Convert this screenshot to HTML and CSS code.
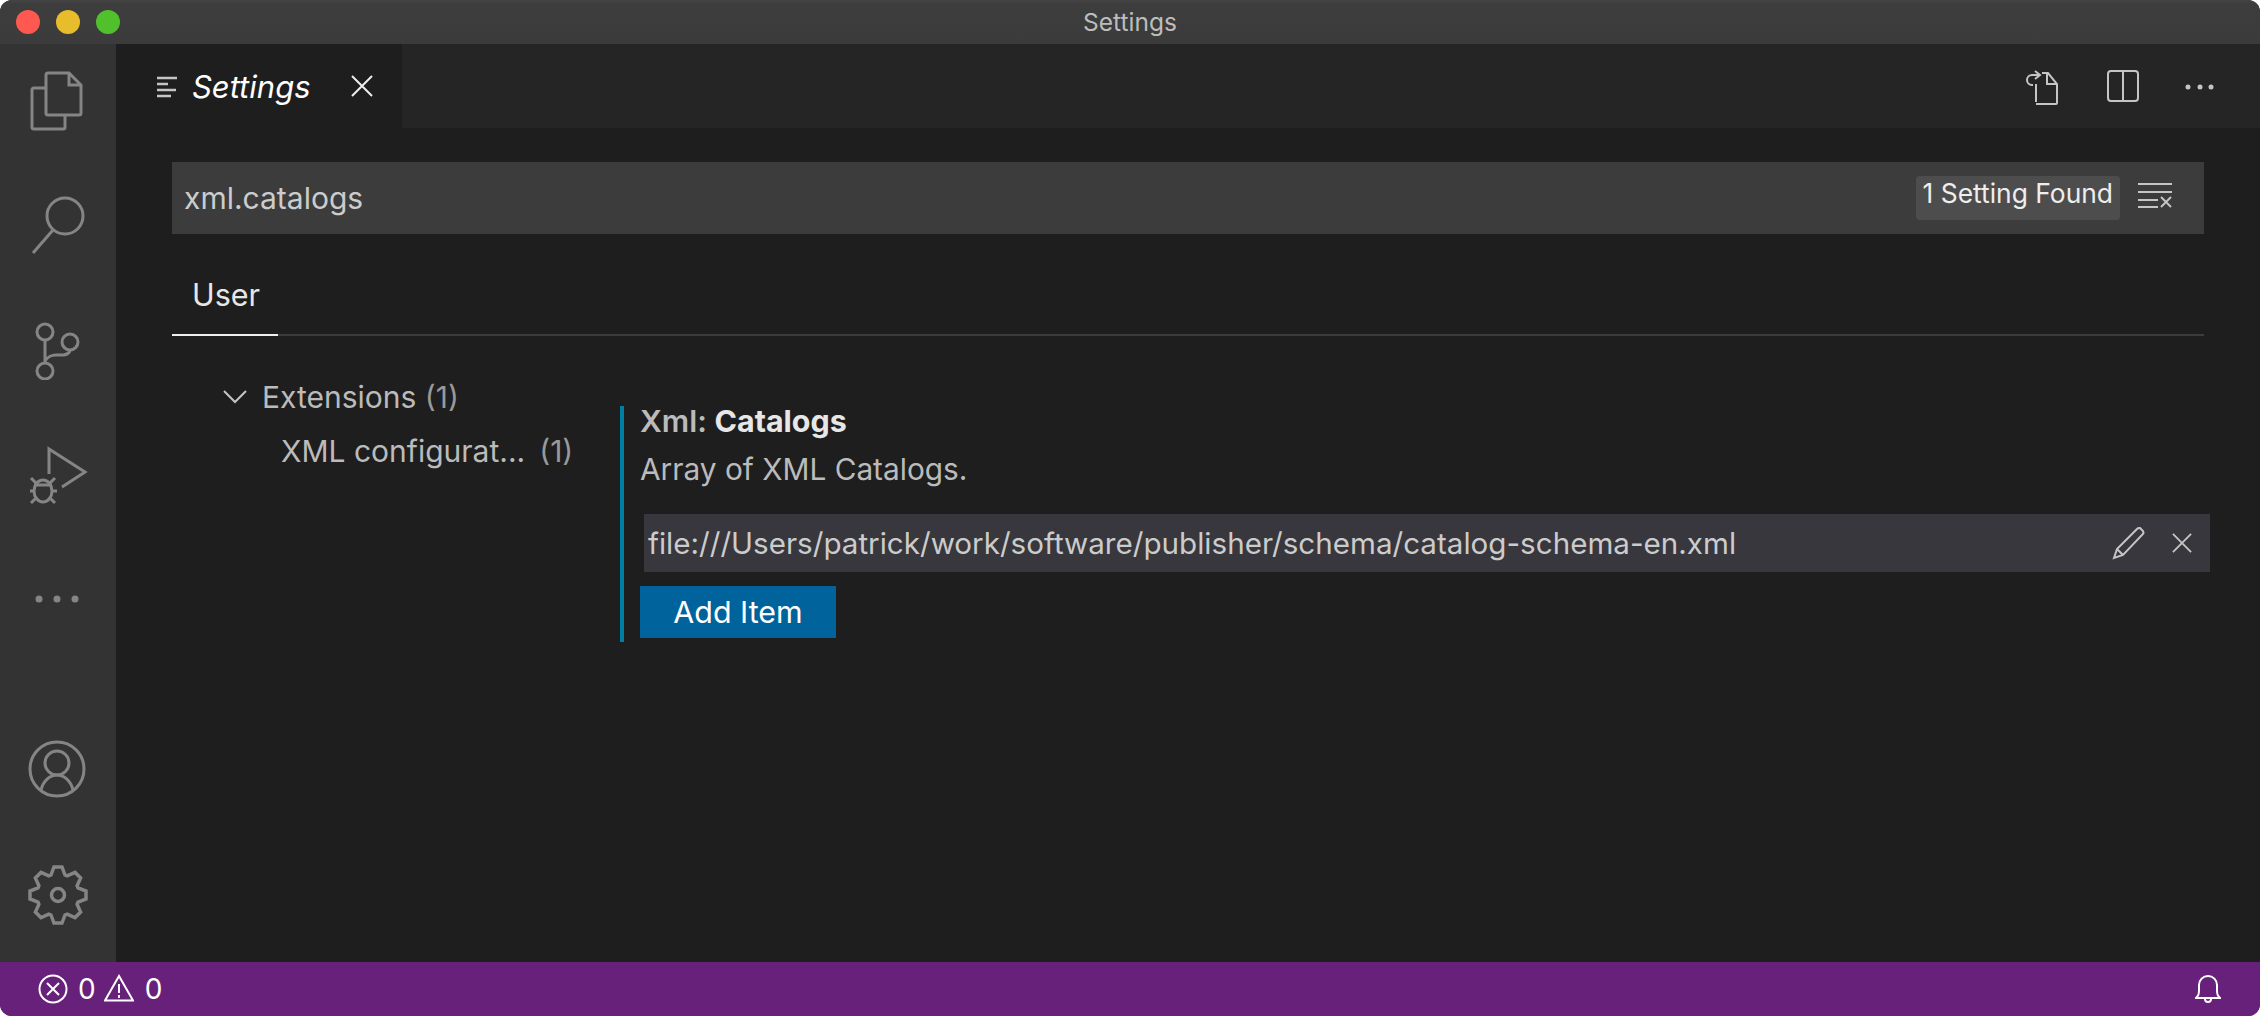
FILE: index.html
```html
<!DOCTYPE html>
<html lang="en">
<head>
    <meta charset="UTF-8">
    <title>Settings</title>
    <link rel="stylesheet" href="styles.css">
</head>
<body>
<div class="window">
    <header class="titlebar">
        <div class="lights">
            <span class="light red"></span>
            <span class="light yellow"></span>
            <span class="light green"></span>
        </div>
        <div class="window-title">Settings</div>
    </header>

    <div class="main">
        <nav class="activity">
            <div class="activity-top">
                <svg class="act-icon" viewBox="0 0 60 60"><path d="M18 17H6a2 2 0 0 0-2 2v37a2 2 0 0 0 2 2h29a2 2 0 0 0 2-2V45M20 2h21l12 12v28a2 2 0 0 1-2 2H20a2 2 0 0 1-2-2V4a2 2 0 0 1 2-2zM41 3v11h11"/></svg>
                <svg class="act-icon" viewBox="0 0 60 60"><circle cx="37" cy="20" r="18"/><path d="M25 34L5 57"/></svg>
                <svg class="act-icon" viewBox="0 0 60 60"><circle cx="17" cy="12" r="8"/><circle cx="42" cy="22" r="8"/><circle cx="17" cy="51" r="8"/><path d="M17 20v23M42 30c0 3-4 5-7 5h-7c-4 0-9 2-11 6"/></svg>
                <svg class="act-icon" viewBox="0 0 60 60"><path d="M21 29V4l36 23-23 15"/><ellipse cx="15" cy="46" rx="9" ry="11"/><path d="M6 40h18M2 46h4M24 46h5M3 33l6 6M27 33l-6 6M3 58l6-6M27 58l-6-6"/></svg>
                <svg class="act-icon dots" viewBox="0 0 60 60"><circle cx="11" cy="30" r="3.5"/><circle cx="29" cy="30" r="3.5"/><circle cx="47" cy="30" r="3.5"/></svg>
            </div>
            <div class="activity-bottom">
                <svg class="act-icon" viewBox="0 0 60 60"><circle cx="29" cy="30" r="27"/><circle cx="29" cy="24" r="12"/><path d="M13 51c2-9 9-15 16-15s14 6 16 15"/></svg>
                <svg class="act-icon gear" viewBox="0 0 60 60"><path d="M23 10L26 2H34L37 10L39.2 10.9L47 7.4L52.6 13L49.1 20.8L50 23L58 26V34L50 37L49.1 39.2L52.6 47L47 52.6L39.2 49.1L37 50L34 58H26L23 50L20.8 49.1L13 52.6L7.4 47L10.9 39.2L10 37L2 34V26L10 23L10.9 20.8L7.4 13L13 7.4L20.8 10.9Z"/><circle cx="30" cy="30" r="6.5"/></svg>
            </div>
        </nav>

        <div class="editor">
            <div class="tabbar">
                <div class="tab">
                    <svg class="tab-icon" viewBox="0 0 20 22"><path d="M0 2h20M0 8h11M0 14h19M0 20h14"/></svg>
                    <span class="tab-name">Settings</span>
                    <svg class="tab-close" viewBox="0 0 22 22"><path d="M1 1l20 20M21 1L1 21"/></svg>
                </div>
                <div class="tab-actions">
                    <svg class="action open-json" viewBox="0 0 36 36"><path d="M12 32V14M12 34h20a1 1 0 0 0 1-1V14L24 3h-6M23 3v11h10M15 5H8a5 5 0 0 0 0 10h1M11 1l5 4-5 4"/></svg>
                    <svg class="action split" viewBox="0 0 32 32"><rect x="1" y="1" width="30" height="30" rx="3"/><path d="M16 1v30"/></svg>
                    <svg class="action more" viewBox="0 0 32 8"><circle cx="4" cy="4" r="2.5"/><circle cx="16" cy="4" r="2.5"/><circle cx="27" cy="4" r="2.5"/></svg>
                </div>
            </div>

            <div class="settings">
                <div class="searchbox">
                    <span class="search-text">xml.catalogs</span>
                    <span class="count">1 Setting Found</span>
                    <svg class="clear" viewBox="0 0 34 26"><path d="M0 2h34M0 10h34M0 18h20M0 25h20M23 15l10 10M33 15L23 25"/></svg>
                </div>

                <div class="scopes">
                    <div class="scope">User</div>
                </div>

                <div class="body">
                    <aside class="tree">
                        <div class="tree-row">
                            <svg class="chevron" viewBox="0 0 24 14"><path d="M1 1l11 11L23 1"/></svg>
                            <span>Extensions <span class="num">(1)</span></span>
                        </div>
                        <div class="tree-row child">
                            <span>XML configurat...</span>
                            <span class="num">(1)</span>
                        </div>
                    </aside>

                    <section class="setting">
                        <div class="setting-title">Xml: <b>Catalogs</b></div>
                        <div class="setting-desc">Array of XML Catalogs.</div>
                        <div class="list-row">
                            <span class="list-value">file:///Users/patrick/work/software/publisher/schema/catalog-schema-en.xml</span>
                            <svg class="pencil" viewBox="0 0 34 34"><path d="M2 32l3-9L25 3a3 3 0 0 1 3-1l3 3a3 3 0 0 1 0 3L11 29zM5 23l6 6"/></svg>
                            <svg class="row-close" viewBox="0 0 22 22"><path d="M1 1l20 20M21 1L1 21"/></svg>
                        </div>
                        <button class="add-item">Add Item</button>
                    </section>
                </div>
            </div>
        </div>
    </div>

    <footer class="statusbar">
        <div class="status-left">
            <svg class="st-icon" viewBox="0 0 30 30"><circle cx="15" cy="15" r="13.5"/><path d="M9 9l12 12M21 9L9 21"/></svg>
            <span>0</span>
            <svg class="st-icon warn" viewBox="0 0 30 28"><path d="M15 2L29 26.5H1zM15 10v9M15 21v3"/></svg>
            <span>0</span>
        </div>
        <svg class="bell" viewBox="0 0 26 32"><path d="M1 25c2-2 3-3 3-8v-5a9 9 0 0 1 18 0v5c0 5 1 6 3 8zM10 26a3 3 0 0 0 6 0"/></svg>
    </footer>
</div>
</body>
</html>
```

FILE: styles.css
```css
* {
    box-sizing: border-box;
}

html, body {
    margin: 0;
    height: 100%;
    background-color: #fff;
}

body {
    font-family: Inter, 'Noto Sans', sans-serif;
    color: #ccc;
}

svg {
    display: block;
    flex: none;
    fill: none;
    stroke-width: 2;
}

.window {
    height: 1016px;
    display: flex;
    flex-direction: column;
    border-radius: 12px;
    overflow: hidden;
    background-color: #1e1e1e;
}

/* title bar */
.titlebar {
    height: 44px;
    flex: none;
    display: flex;
    align-items: center;
    justify-content: center;
    position: relative;
    background: linear-gradient(#444 0, #3d3d3d 4px, #3b3b3b 100%);
}

.lights {
    position: absolute;
    left: 16px;
    top: 10px;
    display: flex;
    gap: 16px;
}

.light {
    width: 24px;
    height: 24px;
    border-radius: 50%;
}

.red { background-color: #fe5950; }
.yellow { background-color: #e7bd2b; }
.green { background-color: #50c12c; }

.window-title {
    font-size: 24.5px;
    color: #bdbdbd;
}

.main {
    flex: 1;
    display: flex;
    min-height: 0;
}

/* activity bar */
.activity {
    width: 116px;
    flex: none;
    display: flex;
    flex-direction: column;
    justify-content: space-between;
    align-items: center;
    padding: 27px 0 37px;
    background-color: #333;
}

.activity-top {
    display: flex;
    flex-direction: column;
    gap: 64.5px;
}

.activity-bottom {
    display: flex;
    flex-direction: column;
    gap: 66px;
}

.act-icon {
    width: 60px;
    height: 60px;
    stroke: #858585;
    stroke-width: 3;
}

.act-icon.dots {
    fill: #858585;
    stroke: none;
}

.act-icon.gear {
    stroke-width: 3.5;
}

.editor {
    flex: 1;
    min-width: 0;
    display: flex;
    flex-direction: column;
}

/* tabs */
.tabbar {
    height: 84px;
    flex: none;
    display: flex;
    justify-content: space-between;
    background-color: #252526;
}

.tab {
    width: 286px;
    display: flex;
    align-items: flex-start;
    padding: 32px 0 0 41px;
    background-color: #1e1e1e;
}

.tab-icon {
    width: 20px;
    height: 22px;
    stroke: #c5c5c5;
    stroke-width: 2.5;
}

.tab-name {
    width: 116px;
    margin-left: 15px;
    margin-top: -11px;
    font-size: 31px;
    font-style: italic;
    line-height: 44px;
    color: #fff;
}

.tab-close {
    width: 22px;
    height: 22px;
    margin: -1px 0 0 43px;
    stroke: #eee;
}

.tab-actions {
    display: flex;
    align-items: flex-start;
    padding: 26px 44px 0 0;
}

.action {
    stroke: #c5c5c5;
}

.open-json {
    width: 36px;
    height: 36px;
}

.split {
    width: 32px;
    height: 32px;
    margin-left: 47px;
}

.more {
    width: 32px;
    height: 8px;
    margin: 13px 0 0 45px;
    fill: #c5c5c5;
    stroke: none;
}

/* settings page */
.settings {
    flex: 1;
    padding: 34px 56px 0;
}

.searchbox {
    height: 72px;
    display: flex;
    align-items: center;
    padding: 0 32px 0 12px;
    background-color: #3c3c3c;
}

.search-text {
    flex: 1;
    font-size: 30px;
    color: #ccc;
}

.count {
    height: 44px;
    padding: 0 7px;
    border-radius: 4px;
    font-size: 26.4px;
    line-height: 34px;
    color: #eee;
    background-color: #4d4d4d;
}

.clear {
    width: 34px;
    height: 26px;
    margin: 0 0 6px 18px;
    stroke: #c5c5c5;
}

.scopes {
    height: 102px;
    display: flex;
    align-items: flex-end;
    border-bottom: 2px solid #3c3c3c;
}

.scope {
    width: 106px;
    height: 64px;
    margin-bottom: -2px;
    padding-left: 20px;
    border-bottom: 2px solid #eee;
    font-size: 30.5px;
    line-height: 46px;
    color: #e7e7e7;
}

.body {
    display: flex;
}

.tree {
    width: 448px;
    flex: none;
    padding-top: 34px;
}

.tree-row {
    height: 54px;
    display: flex;
    align-items: center;
    padding-left: 51px;
    font-size: 30px;
    color: #bbb;
    white-space: pre;
}

.chevron {
    width: 24px;
    height: 14px;
    margin-right: 15px;
    stroke: #c5c5c5;
}

.tree-row.child {
    padding-left: 109px;
    gap: 14px;
}

.num {
    color: #999;
}

/* the one setting */
.setting {
    flex: 1;
    min-width: 0;
    margin: 70px -6px 0 0;
    padding: 0 0 4px 16px;
    border-left: 4px solid #007fa5;
}

.setting-title {
    font-size: 30.4px;
    line-height: 30px;
    font-weight: 600;
    color: #bbb;
}

.setting-title b {
    font-weight: 700;
    color: #e7e7e7;
}

.setting-desc {
    margin-top: 16px;
    font-size: 29.8px;
    line-height: 34px;
    color: #bbb;
}

.list-row {
    height: 58px;
    margin: 28px 0 0 4px;
    display: flex;
    align-items: center;
    padding: 0 18px 0 4px;
    background-color: #37373d;
}

.list-value {
    flex: 1;
    font-size: 29.6px;
    color: #ccc;
}

.pencil {
    width: 34px;
    height: 34px;
    stroke: #c5c5c5;
}

.row-close {
    width: 20px;
    height: 20px;
    margin-left: 26px;
    stroke: #c5c5c5;
}

.add-item {
    display: block;
    width: 196px;
    height: 52px;
    margin-top: 14px;
    padding: 0;
    border: none;
    font-family: inherit;
    font-size: 30.4px;
    color: #fff;
    background-color: #00639c;
}

/* status bar */
.statusbar {
    height: 54px;
    flex: none;
    display: flex;
    align-items: center;
    justify-content: space-between;
    padding: 0 39px 0 38px;
    font-size: 28px;
    color: #fff;
    background-color: #68217a;
}

.status-left {
    display: flex;
    align-items: center;
}

.st-icon {
    width: 30px;
    height: 30px;
    stroke: #fff;
}

.st-icon.warn {
    height: 28px;
    margin: 0 11px 2px 8px;
}

.status-left span:nth-of-type(1) {
    margin-left: 10px;
}

.bell {
    width: 26px;
    height: 32px;
    stroke: #fff;
}
```
